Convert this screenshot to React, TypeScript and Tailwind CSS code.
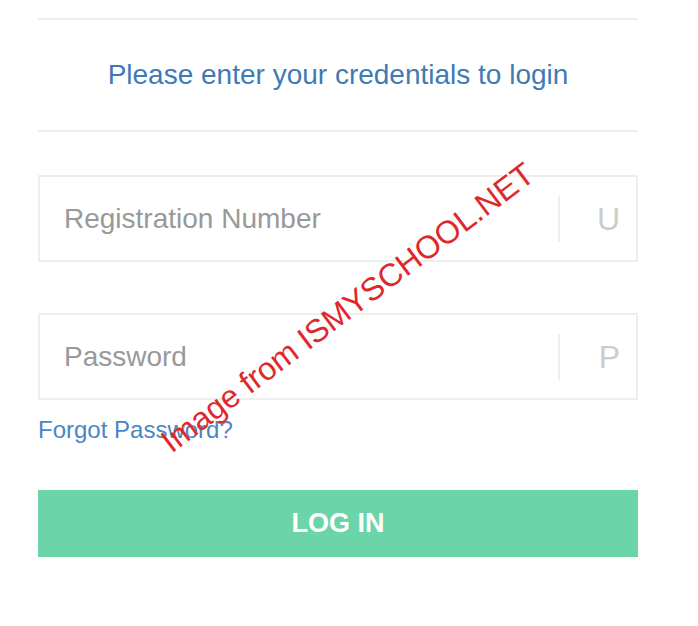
export default function App() {
  return (
    <div className="relative min-h-[626px] w-[698px] bg-white font-['Liberation_Sans',Arial,sans-serif]">
      <div className="px-[38px] pt-[18px] w-[676px]">
        <div className="border-t-2 border-b-2 border-[#eeeeee] h-[114px] flex items-center justify-center">
          <h2 className="text-[28px] text-[#3f7ab5] leading-none">
            Please enter your credentials to login
          </h2>
        </div>

        <div className="mt-[43px] flex items-center h-[87px] border-2 border-[#eeeeee]">
          <span className="flex-1 pl-[24px] text-[28px] text-[#999999]">Registration Number</span>
          <span className="h-[46px] border-l-2 border-[#eeeeee]"></span>
          <span className="w-[76px] text-right pr-[16px] text-[32px] text-[#cccccc]">U</span>
        </div>

        <div className="mt-[51px] flex items-center h-[87px] border-2 border-[#eeeeee]">
          <span className="flex-1 pl-[24px] text-[28px] text-[#999999]">Password</span>
          <span className="h-[46px] border-l-2 border-[#eeeeee]"></span>
          <span className="w-[76px] text-right pr-[16px] text-[32px] text-[#cccccc]">P</span>
        </div>

        <a className="block mt-[17px] text-[24px] text-[#4a86c4] leading-[26px]">Forgot Password?</a>

        <button className="mt-[47px] w-full h-[67px] bg-[#6bd4a8] text-white font-bold text-[27px] uppercase">
          Log in
        </button>
      </div>

      <div className="absolute left-[165px] top-[429px] -rotate-[37deg] origin-left text-[32px] text-[#e0282c] whitespace-nowrap pointer-events-none leading-none">
        Image from ISMYSCHOOL.NET
      </div>
    </div>
  );
}
